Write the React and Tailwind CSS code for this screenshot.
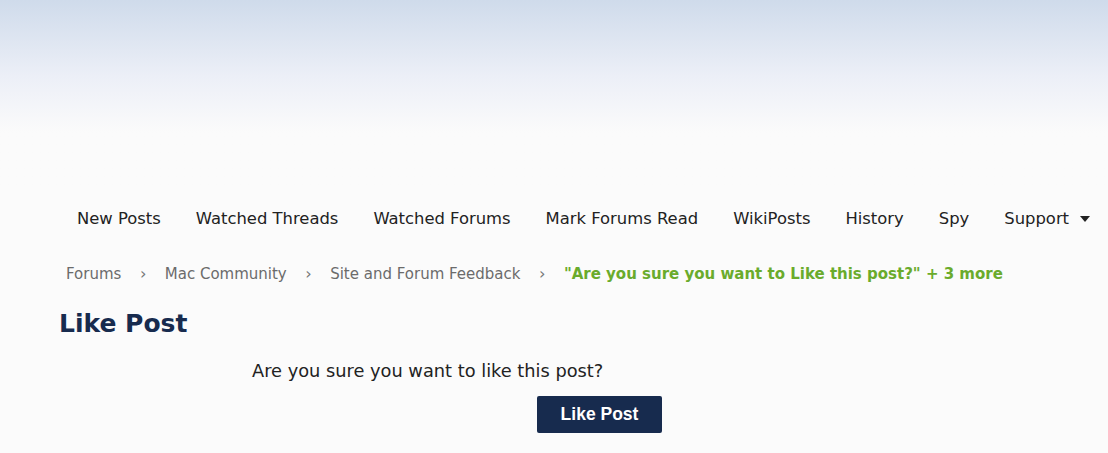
const navItems = ['New Posts', 'Watched Threads', 'Watched Forums', 'Mark Forums Read', 'WikiPosts', 'History', 'Spy'];
const crumbs = ['Forums', 'Mac Community', 'Site and Forum Feedback'];

export default function App() {
  return (
    <div className="min-h-[453px] bg-[#fbfbfb] text-[#222]" style={{ fontFamily: '"DejaVu Sans", Verdana, sans-serif' }}>
      <header className="h-[190px] bg-gradient-to-b from-[#cfdbeb] via-[#eceff7] via-40% to-[#fbfbfb] to-70%" />

      <nav className="flex items-center h-[56px] pl-[77px] gap-[35px] text-[16.4px] mt-[1px]">
        {navItems.map(item => (
          <a key={item} className="whitespace-nowrap">{item}</a>
        ))}
        <a className="flex items-center gap-[11px] whitespace-nowrap">
          Support
          <svg width="10" height="6" viewBox="0 0 10 6"><path d="M0 0h10L5 6z" fill="#222" /></svg>
        </a>
      </nav>

      <div className="flex items-center pl-[66px] h-[54px] text-[15px] text-[#6b6b6b]">
        {crumbs.map(c => (
          <span key={c} className="flex items-center">
            <span>{c}</span>
            <span className="px-[18.5px] text-[#777] text-[16px]">›</span>
          </span>
        ))}
        <span className="font-bold text-[#6aab2c]">"Are you sure you want to Like this post?" + 3 more</span>
      </div>

      <h1 className="pl-[59px] text-[25px] font-bold text-[#172b4e] leading-none pt-[10px]">Like Post</h1>

      <div className="pl-[252px] pt-[22px] text-[17.8px] text-[#222]">Are you sure you want to like this post?</div>

      <div className="pl-[537px] pt-[11px]">
        <button className="w-[125px] h-[37px] rounded-[2px] bg-[#172b4e] text-white text-[17.5px] font-bold" style={{ fontFamily: '"Liberation Sans", Arial, sans-serif' }}>
          Like Post
        </button>
      </div>
    </div>
  );
}
